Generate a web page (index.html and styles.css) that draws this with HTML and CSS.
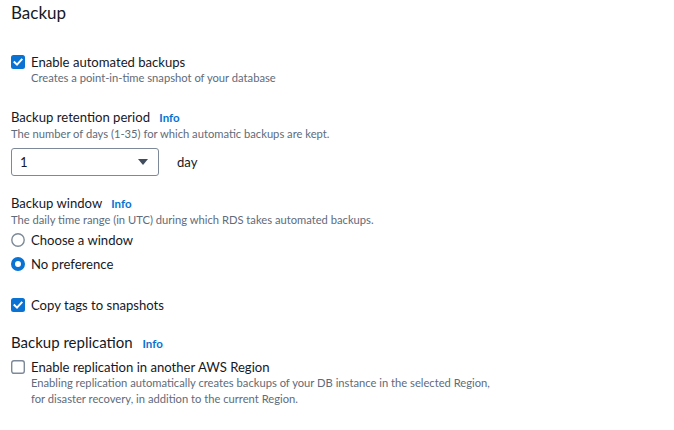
FILE: index.html
```html
<!DOCTYPE html>
<html>
<head>
<meta charset="utf-8">
<link rel="stylesheet" href="styles.css">
</head>
<body>
<div class="panel">
  <h2 class="title">Backup</h2>

  <div class="check-row first">
    <span class="box checked"><svg viewBox="0 0 14 14" width="14" height="14"><rect x="0" y="0" width="14" height="14" rx="2.5" fill="#0972d3"/><path d="M3.5 7.2 L6 9.6 L10.6 4.6" fill="none" stroke="#fff" stroke-width="2" stroke-linecap="square"/></svg></span>
    <div class="check-text">
      <div class="label">Enable automated backups</div>
      <div class="desc">Creates a point-in-time snapshot of your database</div>
    </div>
  </div>

  <div class="field retention">
    <div class="field-label">Backup retention period <a class="info">Info</a></div>
    <div class="desc">The number of days (1-35) for which automatic backups are kept.</div>
    <div class="select-row">
      <div class="select"><span class="value">1</span><svg class="caret" viewBox="0 0 10 6" width="10" height="6"><path d="M0 0 H10 L5 6 Z" fill="#414d5c"/></svg></div>
      <span class="unit">day</span>
    </div>
  </div>

  <div class="field window">
    <div class="field-label">Backup window <a class="info">Info</a></div>
    <div class="desc">The daily time range (in UTC) during which RDS takes automated backups.</div>
    <div class="radio-row">
      <span class="radio"><svg viewBox="0 0 14 14" width="14" height="14"><circle cx="7" cy="7" r="6.2" fill="#fff" stroke="#7d8998" stroke-width="1.4"/></svg></span>
      <span class="label">Choose a window</span>
    </div>
    <div class="radio-row">
      <span class="radio"><svg viewBox="0 0 14 14" width="14" height="14"><circle cx="7" cy="7" r="5" fill="#fff" stroke="#0972d3" stroke-width="4"/></svg></span>
      <span class="label">No preference</span>
    </div>
  </div>

  <div class="check-row copy">
    <span class="box checked"><svg viewBox="0 0 14 14" width="14" height="14"><rect x="0" y="0" width="14" height="14" rx="2.5" fill="#0972d3"/><path d="M3.5 7.2 L6 9.6 L10.6 4.6" fill="none" stroke="#fff" stroke-width="2" stroke-linecap="square"/></svg></span>
    <div class="check-text">
      <div class="label">Copy tags to snapshots</div>
    </div>
  </div>

  <div class="field replication">
    <div class="section-label">Backup replication <a class="info">Info</a></div>
    <div class="check-row">
      <span class="box"><svg viewBox="0 0 14 14" width="14" height="14"><rect x="0.7" y="0.7" width="12.6" height="12.6" rx="2.2" fill="#fff" stroke="#7d8998" stroke-width="1.4"/></svg></span>
      <div class="check-text">
        <div class="label">Enable replication in another AWS Region</div>
        <div class="desc">Enabling replication automatically creates backups of your DB instance in the selected Region,<br>for disaster recovery, in addition to the current Region.</div>
      </div>
    </div>
  </div>
</div>
</body>
</html>
```

FILE: styles.css
```css
* { box-sizing: border-box; }
html, body { margin: 0; padding: 0; background: #fff; }
body {
  font-family: Lato, "Liberation Sans", Arial, sans-serif;
  color: #16191f;
}
.panel {
  padding: 3px 11px 0 11px;
  display: flex;
  flex-direction: column;
}
.title {
  margin: 0;
  font-size: 17px;
  font-weight: 400;
  line-height: 20px;
}
.check-row {
  display: flex;
  align-items: flex-start;
  gap: 6px;
}
.check-row.first { margin-top: 31px; }
.box, .radio {
  display: flex;
  width: 14px;
  height: 14px;
  margin-top: 1px;
  flex: none;
}
.label {
  font-size: 13.1px;
  line-height: 16px;
}
.desc {
  font-size: 11.2px;
  line-height: 16px;
  color: #5f6b7a;
}
.field-label {
  font-size: 13.1px;
  line-height: 16px;
}
.section-label {
  font-size: 15px;
  line-height: 20px;
}
.info {
  font-size: 11.5px;
  font-weight: 700;
  color: #0972d3;
  margin-left: 6px;
}
.retention { margin-top: 23px; }
.select-row {
  display: flex;
  align-items: center;
  gap: 18px;
  margin-top: 6px;
}
.select {
  width: 148px;
  height: 28px;
  border: 1px solid #7d8998;
  border-radius: 3px;
  display: flex;
  align-items: center;
  justify-content: space-between;
  padding: 0 10px 0 8px;
  font-size: 13.1px;
}
.caret { display: block; }
.unit { font-size: 13.1px; }
.window { margin-top: 19px; }
.radio-row {
  display: flex;
  align-items: center;
  gap: 6px;
  margin-top: 2px;
  height: 20px;
}
.radio-row .radio { margin-top: 0; }
.radio-row + .radio-row { margin-top: 4px; }
.copy { margin-top: 23px; }
.replication { margin-top: 19px; }
.replication .check-row { margin-top: 5px; }
```
